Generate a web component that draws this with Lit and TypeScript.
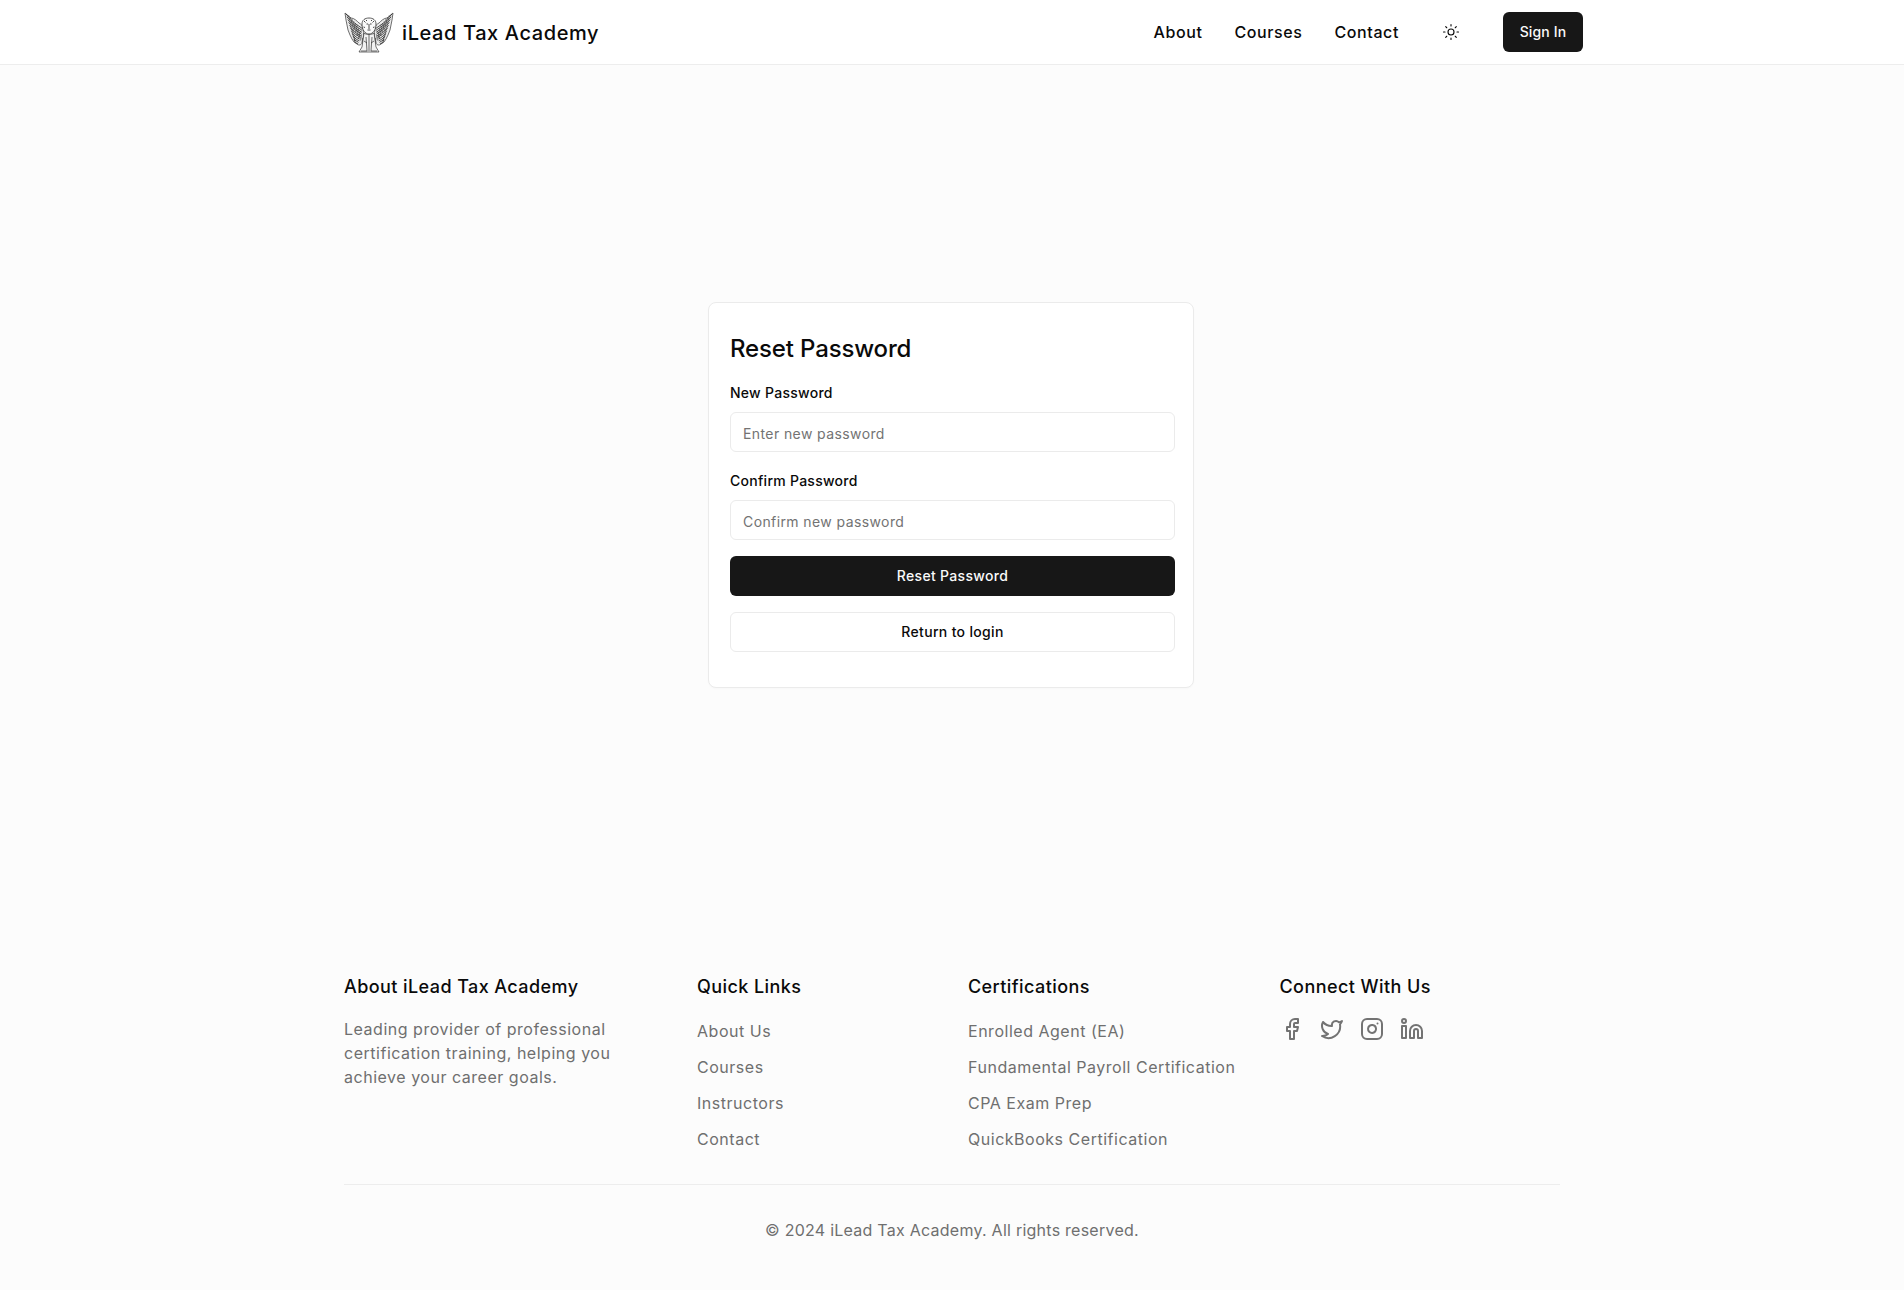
import { LitElement, html, css, svg } from "lit";
import { customElement } from "lit/decorators.js";

const feathers = Array.from({ length: 10 }, (_, i) => {
  const t = i / 9;
  const x1 = 19 - t * 5;
  const y1 = 18 + t * 15;
  const x2 = 2 + t * 8;
  const y2 = 3 + t * 25;
  const cx = (x1 + x2) / 2 - 1.5;
  const cy = (y1 + y2) / 2 + 2;
  return `M${x1} ${y1}Q${cx} ${cy} ${x2} ${y2}`;
});
const barbs = Array.from({ length: 48 }, (_, i) => {
  const row = i % 6;
  const col = Math.floor(i / 6);
  const x = 3.5 + col * 1.5 + row * 1.7;
  const y = 6 + col * 3.1 + row * 1.9;
  return `M${x} ${y}l1.7 -1.3`;
});

const wing = svg`
  <path d="M1 2C3 4 5 5 7 7C10 7 13 10 15 12C17 13 19 15 20 18L19 30C18 34 15 35 13 33L10 31L8 28L6 24L4 19L3 14L2 9Z" fill="#ececec" stroke="#333" stroke-width=".7"/>
  ${feathers.map((d) => svg`<path d=${d} fill="none" stroke="#1c1c1c" stroke-width=".75"/>`)}
  ${barbs.map((d) => svg`<path d=${d} fill="none" stroke="#333" stroke-width=".6"/>`)}
`;

const logo = html`<svg class="logo" viewBox="0 0 50 42" aria-hidden="true">
  <g>${wing}</g>
  <g transform="translate(50 0) scale(-1 1)">${wing}</g>
  <path d="M20 22L18 36L15 41H35L32 36L30 22C28 24 22 24 20 22Z" fill="#f2f2f2" stroke="#333" stroke-width=".7"/>
  <path d="M18 13C18 9 21 7 25 7C29 7 32 9 32 13C32 19 29 23 25 23C21 23 18 19 18 13Z" fill="#fafafa" stroke="#333" stroke-width=".8"/>
  <path d="M22.5 13h1.6M26 13h1.6M25 13v5M23.5 19h3M20 10l1.5 1.5M30 10l-1.5 1.5M19.5 16l1.5.5M30.5 16l-1.5.5M22 9l1 1M28 9l-1 1" fill="none" stroke="#1c1c1c" stroke-width=".8"/>
  <path d="M22 26l1 14M28 26l-1 14M25 24v16M17 40h6M27 40h6M20 30l3 2M30 30l-3 2" fill="none" stroke="#333" stroke-width=".7"/>
</svg>`;

const icon = (body: unknown, cls = "icon") =>
  html`<svg class=${cls} viewBox="0 0 24 24" fill="none" stroke="currentColor" stroke-width="2" stroke-linecap="round" stroke-linejoin="round" aria-hidden="true">${body}</svg>`;

const sun = svg`<circle cx="12" cy="12" r="4"/><path d="M12 2v2M12 20v2M4.93 4.93l1.41 1.41M17.66 17.66l1.41 1.41M2 12h2M20 12h2M6.34 17.66l-1.41 1.41M19.07 4.93l-1.41 1.41"/>`;
const facebook = svg`<path d="M18 2h-3a5 5 0 0 0-5 5v3H7v4h3v8h4v-8h3l1-4h-4V7a1 1 0 0 1 1-1h3z"/>`;
const twitter = svg`<path d="M22 4s-.7 2.1-2 3.4c1.6 10-9.4 17.3-18 11.6 2.2.1 4.4-.6 6-2C3 15.5.5 9.6 3 5c2.2 2.6 5.6 4.1 9 4-.9-4.2 4-6.6 7-3.8 1.1 0 3-1.2 3-1.2z"/>`;
const instagram = svg`<rect x="2" y="2" width="20" height="20" rx="5" ry="5"/><path d="M16 11.37A4 4 0 1 1 12.63 8 4 4 0 0 1 16 11.37z"/><line x1="17.5" y1="6.5" x2="17.51" y2="6.5"/>`;
const linkedin = svg`<path d="M16 8a6 6 0 0 1 6 6v7h-4v-7a2 2 0 0 0-2-2 2 2 0 0 0-2 2v7h-4v-7a6 6 0 0 1 6-6z"/><rect x="2" y="9" width="4" height="12"/><circle cx="4" cy="4" r="2"/>`;

@customElement("app-root")
export class AppRoot extends LitElement {
  static styles = css`
    :host {
      display: flex;
      flex-direction: column;
      min-height: 1290px;
      background: #fcfcfc;
      color: #0a0a0a;
      font-family: Inter, "Liberation Sans", sans-serif;
      font-size: 16px;
      line-height: 24px;
    }
    * { box-sizing: border-box; }
    a { color: inherit; text-decoration: none; }
    header {
      height: 65px;
      flex: none;
      background: #fff;
      border-bottom: 1px solid #ededed;
      padding: 0 321px 0 344px;
      display: flex;
      align-items: center;
      justify-content: space-between;
    }
    .brand { display: flex; align-items: center; gap: 8px; }
    .logo { width: 50px; height: 42px; display: block; }
    .brand span { font-size: 20px; line-height: 28px; letter-spacing: 0.6px; font-weight: 500; padding-top: 1px; }
    .right { display: flex; align-items: center; gap: 32px; }
    nav { display: flex; gap: 32px; }
    nav a { font-size: 16px; font-weight: 500; letter-spacing: 0.6px; }
    .theme { width: 40px; height: 40px; display: flex; align-items: center; justify-content: center; color: #0a0a0a; }
    .sun { width: 18px; height: 18px; stroke-width: 1.5; }
    .signin {
      width: 80px; height: 40px; border-radius: 6px; background: #171717; color: #fafafa;
      display: flex; align-items: center; justify-content: center;
      font-size: 14px; font-weight: 500; letter-spacing: 0.15px;
    }
    main { flex: 1; display: flex; align-items: center; justify-content: center; padding-right: 2px; }
    .card {
      width: 486px;
      height: 386px;
      background: #fff;
      border: 1px solid #ebebeb;
      border-radius: 8px;
      padding: 30px 18px 35px 21px;
      box-shadow: 0 1px 2px rgba(0,0,0,.02);
    }
    h1 { margin: 0 0 18px; font-size: 24px; line-height: 32px; font-weight: 500; letter-spacing: -0.15px; }
    label { display: block; font-size: 14px; line-height: 20px; font-weight: 500; margin-bottom: 9px; letter-spacing: 0.27px; }
    input {
      display: block; width: 100%; height: 40px; padding: 2px 12px 0; background: #fff;
      border: 1px solid #ebebeb; border-radius: 6px; font: inherit; font-size: 14px; letter-spacing: 0.4px; margin-bottom: 19px; outline: none;
    }
    input.last { margin-bottom: 16px; }
    input::placeholder { color: #737373; opacity: 1; }
    .btn {
      display: flex; width: 100%; height: 40px; align-items: center; justify-content: center;
      border-radius: 6px; font-size: 14px; font-weight: 500; letter-spacing: 0.32px;
    }
    .primary { background: #171717; color: #fafafa; margin-bottom: 16px; }
    .outline { background: #fff; border: 1px solid #ebebeb; }
    footer { flex: none; height: 365px; padding: 48px 344px 0; }
    .cols { display: grid; grid-template-columns: 353px 271px 311.5px 1fr; height: 212px; border-bottom: 1px solid #ededed; }
    h2 { margin: 0 0 16px; font-size: 18px; line-height: 28px; font-weight: 500; letter-spacing: 0.42px; }
    h2.flush { margin-bottom: 0; }
    .about p { margin: 0; width: 280px; color: #6f6f6f; letter-spacing: 0.52px; }
    ul { list-style: none; margin: 18px 0 0; padding: 0; display: flex; flex-direction: column; gap: 12px; color: #6f6f6f; }
    li { letter-spacing: 0.52px; }
    .social { display: flex; gap: 16px; color: #737373; }
    .icon { width: 24px; height: 24px; display: block; stroke-width: 2; }
    .copy { text-align: center; margin: 33px 0 0; color: #6f6f6f; letter-spacing: 0.25px; }
  `;

  render() {
    return html`
      <header>
        <a class="brand" href="#">${logo}<span>iLead Tax Academy</span></a>
        <div class="right">
          <nav><a href="#">About</a><a href="#">Courses</a><a href="#">Contact</a></nav>
          <a class="theme" href="#" aria-label="Toggle theme">${icon(sun, "sun")}</a>
          <a class="signin" href="#">Sign In</a>
        </div>
      </header>
      <main>
        <form class="card">
          <h1>Reset Password</h1>
          <label for="np">New Password</label>
          <input id="np" type="password" placeholder="Enter new password" />
          <label for="cp">Confirm Password</label>
          <input id="cp" class="last" type="password" placeholder="Confirm new password" />
          <a class="btn primary" href="#">Reset Password</a>
          <a class="btn outline" href="#">Return to login</a>
        </form>
      </main>
      <footer>
        <div class="cols">
          <div class="about">
            <h2>About iLead Tax Academy</h2>
            <p>Leading provider of professional certification training, helping you achieve your career goals.</p>
          </div>
          <div>
            <h2 class="flush">Quick Links</h2>
            <ul><li><a href="#">About Us</a></li><li><a href="#">Courses</a></li><li><a href="#">Instructors</a></li><li><a href="#">Contact</a></li></ul>
          </div>
          <div>
            <h2 class="flush">Certifications</h2>
            <ul><li><a href="#">Enrolled Agent (EA)</a></li><li><a href="#">Fundamental Payroll Certification</a></li><li><a href="#">CPA Exam Prep</a></li><li><a href="#">QuickBooks Certification</a></li></ul>
          </div>
          <div>
            <h2>Connect With Us</h2>
            <div class="social">${icon(facebook)}${icon(twitter)}${icon(instagram)}${icon(linkedin)}</div>
          </div>
        </div>
        <p class="copy">© 2024 iLead Tax Academy. All rights reserved.</p>
      </footer>
    `;
  }
}
